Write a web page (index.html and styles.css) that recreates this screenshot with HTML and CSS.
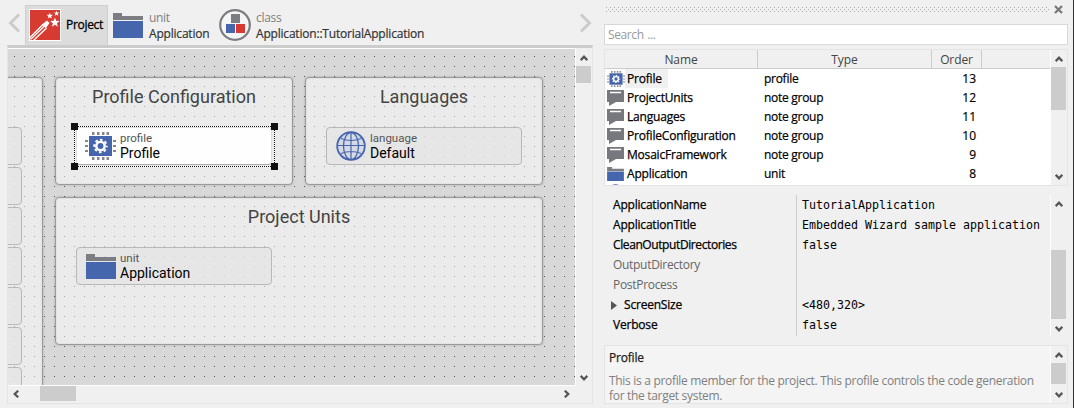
FILE: index.html
```
<!DOCTYPE html>
<html lang="en">
<head>
<meta charset="utf-8">
<title>Project</title>
<link rel="stylesheet" href="styles.css">
</head>
<body>
<svg class="defs" width="0" height="0">
  <symbol id="up" viewBox="0 0 8 6"><path d="M.7 5.200 4 1.700 7.300 5.200" fill="none" stroke="#555" stroke-width="2.200"/></symbol>
  <symbol id="down" viewBox="0 0 8 6"><path d="M.7.8 4 4.300 7.300.8" fill="none" stroke="#555" stroke-width="2.200"/></symbol>
  <symbol id="folder" viewBox="0 0 30 25"><path d="M0 0h9v3h21v4H0z" fill="#7c7d82"/><path d="M0 8h30v17H0z" fill="#4565ad"/></symbol>
  <symbol id="chip" viewBox="0 0 31 28">
    <path d="M7 1.500h3M12 1.500h3M17 1.500h3M21.500 1.500h3M7 26.500h3M12 26.500h3M17 26.500h3M21.500 26.500h3" stroke="#85868b" stroke-width="3" stroke-dasharray="2.500 .5"/>
    <path d="M0 9h3M0 14h3M0 19h3M28 9h3M28 14h3M28 19h3" stroke="#85868b" stroke-width="2"/>
    <path d="M4 4h23v20H4z" fill="#4565ad"/>
    <circle cx="15.500" cy="14" r="4.200" fill="none" stroke="#fff" stroke-width="2.500"/>
    <circle cx="15.500" cy="14" r="6.200" fill="none" stroke="#fff" stroke-width="2" stroke-dasharray="2.600 2.270" stroke-dashoffset="1.300"/>
  </symbol>
  <symbol id="note" viewBox="0 0 17 16"><path d="M0 0h17v12H9L2 16V12H0z" fill="#77787d"/><path d="M3 2.500h11" stroke="#fff" stroke-width="1.500"/></symbol>
</svg>
<div class="app">
  <main class="editor">
    <header class="crumbs">
      <svg class="prev" width="13" height="20"><path d="M11 1.500 2.500 10l8.500 8.500" fill="none" stroke="#ccc" stroke-width="3"/></svg>
      <div class="tab">
        <svg width="32" height="32" viewBox="0 0 32 32"><path d="M0 0h32v32H0z" fill="#fff"/><path d="M1 1h30v30H1z" fill="#d73a31"/>
          <path d="M1 27.500 13.500 15l4.500 4.500L6 31H1z" fill="#fff"/><path d="M1 29.500 14 16.500l2.500 2.500L4 31H1z" fill="#d73a31"/><path d="M1.500 30.500 15.500 17" stroke="#fff" stroke-width="1.200"/>
          <path d="M13 15.500l5-4 2.500 2.500-3.500 5z" fill="#fff"/>
          <path d="M26 8.500l1.100 3.300 3.600.2-2.800 2.200.9 3.500-2.900-2-3 2 1-3.500-2.800-2.200 3.600-.2zM20.800 3.500l.8 2.200h2.500l-1.900 1.500.7 2.400-2.100-1.400-2.100 1.400.7-2.400L17.500 5.700H20zM27.600 1.700l.7 1.800h2.100l-1.600 1.300.5 2-1.700-1.100-1.800 1.100.6-2-1.600-1.300h2.100z" fill="#fff"/></svg>
        <span class="tab-name">Project</span>
      </div>
      <div class="crumb unit"><svg width="30" height="25"><use href="#folder"/></svg><div><small>unit</small><b>Application</b></div></div>
      <div class="crumb class">
        <svg width="32" height="32"><circle cx="16" cy="16" r="14.800" fill="#f5f5f5" stroke="#7c7d82" stroke-width="2.200"/><path d="M12 5h9v9h-9z" fill="#7c7d82"/><path d="M7 15h9v9H7z" fill="#4565ad"/><path d="M17 15h9v9h-9z" fill="#d73a31"/></svg>
        <div><small>class</small><b>Application::TutorialApplication</b></div>
      </div>
      <svg class="next" width="13" height="20"><path d="M2 1.500 10.500 10 2 18.500" fill="none" stroke="#ccc" stroke-width="3"/></svg>
    </header>
    <section class="stage">
      <div class="canvas">
        <div class="group g-left">
          <i class="item"></i><i class="item"></i><i class="item"></i><i class="item"></i><i class="item"></i><i class="item"></i><i class="item"></i>
        </div>
        <div class="group g-profile"><h2>Profile Configuration</h2>
          <div class="item selected"><svg class="i-chip" width="31" height="28"><use href="#chip"/></svg><div><small>profile</small><strong>Profile</strong></div></div>
        </div>
        <div class="group g-lang"><h2>Languages</h2>
          <div class="item"><svg class="i-globe" width="30" height="30" viewBox="0 0 30 30"><g fill="none" stroke="#4565ad"><circle cx="15" cy="15" r="13.800" fill="#d6dae5" stroke-width="1.800"/><path d="M15 1v28M1 14.500h28M5 7.500q10 4 20 0M5 22.500q10-4 20 0" stroke-width="1.200"/><ellipse cx="15" cy="15" rx="7.500" ry="13.500" stroke-width="1.300"/></g></svg><div><small>language</small><strong>Default</strong></div></div>
        </div>
        <div class="group g-units"><h2>Project Units</h2>
          <div class="item"><svg class="i-folder" width="30" height="25"><use href="#folder"/></svg><div><small>unit</small><strong>Application</strong></div></div>
        </div>
        <div class="selection"><i></i><i></i><i></i><i></i></div>
      </div>
      <div class="vbar main-v"><svg width="8" height="6"><use href="#up"/></svg><i class="thumb"></i><svg class="end" width="8" height="6"><use href="#down"/></svg></div>
      <div class="hbar"><svg width="6" height="8"><path d="M5.200.7 1.700 4l3.500 3.300" fill="none" stroke="#555" stroke-width="2.200"/></svg><i class="thumb"></i><svg class="end" width="6" height="8"><path d="M.8.7 4.300 4 .8 7.300" fill="none" stroke="#555" stroke-width="2.200"/></svg></div>
    </section>
  </main>
  <aside class="inspector">
    <div class="titlebar"><i class="grip"></i><svg width="9" height="9"><path d="M1 1l7 7M8 1 1 8" stroke="#777" stroke-width="2.200"/></svg></div>
    <div class="search">Search ...</div>
    <section class="list">
      <div class="table">
        <div class="row head"><span>Name</span><span>Type</span><span>Order</span></div>
        <div class="row"><svg width="18" height="16"><use href="#chip"/></svg><span class="name on">Profile</span><span>profile</span><em>13</em></div>
        <div class="row"><svg width="17" height="16"><use href="#note"/></svg><span class="name">ProjectUnits</span><span>note group</span><em>12</em></div>
        <div class="row"><svg width="17" height="16"><use href="#note"/></svg><span class="name">Languages</span><span>note group</span><em>11</em></div>
        <div class="row"><svg width="17" height="16"><use href="#note"/></svg><span class="name">ProfileConfiguration</span><span>note group</span><em>10</em></div>
        <div class="row"><svg width="17" height="16"><use href="#note"/></svg><span class="name">MosaicFramework</span><span>note group</span><em>9</em></div>
        <div class="row"><svg width="17" height="14"><use href="#folder"/></svg><span class="name">Application</span><span>unit</span><em>8</em></div>
        <div class="row"><svg width="17" height="17"><circle cx="8.500" cy="8.500" r="7.500" fill="#d6dae5" stroke="#4565ad" stroke-width="1.500"/></svg></div>
      </div>
      <div class="vbar list-v"><svg width="8" height="6"><use href="#up"/></svg><i class="thumb"></i><svg class="end" width="8" height="6"><use href="#down"/></svg></div>
    </section>
    <section class="props">
      <dl>
        <dt>ApplicationName</dt><dd>TutorialApplication</dd>
        <dt>ApplicationTitle</dt><dd>Embedded Wizard sample application</dd>
        <dt class="long">CleanOutputDirectories</dt><dd>false</dd>
        <dt class="dim">OutputDirectory</dt><dd></dd>
        <dt class="dim">PostProcess</dt><dd></dd>
        <dt class="parent"><svg width="6" height="9"><path d="M0 0l6 4.500L0 9z" fill="#555"/></svg>ScreenSize</dt><dd>&lt;480,320&gt;</dd>
        <dt>Verbose</dt><dd>false</dd>
      </dl>
      <div class="vbar props-v"><svg width="8" height="6"><use href="#up"/></svg><i class="thumb"></i><svg class="end" width="8" height="6"><use href="#down"/></svg></div>
    </section>
    <section class="help">
      <div class="help-text"><h3>Profile</h3><p>This is a profile member for the project. This profile controls the code generation<br>for the target system.</p></div>
      <div class="vbar help-v"><svg width="8" height="6"><use href="#up"/></svg><i class="thumb"></i><svg class="end" width="8" height="6"><use href="#down"/></svg></div>
    </section>
  </aside>
</div>
</body>
</html>
```
FILE: styles.css
```
* { box-sizing: border-box; }
body { margin: 0; background: #f0f0f0; font: 12px/16px "Open Sans", "Noto Sans", sans-serif; color: #000; overflow: hidden; }
svg { display: block; flex: none; }
.defs { position: absolute; }
small, b, strong, em, i { font-style: normal; font-weight: 400; display: block; }
.app { display: flex; width: 1074px; height: 408px; border-right: 1px solid #333; }
.editor { width: 586px; margin-left: 7px; display: flex; flex-direction: column; }

.crumbs { height: 45px; flex: none; display: flex; white-space: nowrap; }
.prev { margin: 13px 5px 0 1px; }
.next { margin: 13px 1px 0 auto; }
.tab { width: 83px; margin: 5px 5px 0 -1px; padding: 3px 0 0 3px; border: 1px solid #cfcfcf; border-bottom: 0; background: #dcdcdc; display: flex; }
.tab-name { margin: 8px 0 0 5px; letter-spacing: -.3px; -webkit-text-stroke: .3px #000; }
.crumb { display: flex; line-height: 15px; padding-top: 10px; }
.crumb small { font-size: 12px; color: #808080; letter-spacing: -.3px; }
.crumb b { color: #333; letter-spacing: -.2px; margin-top: 1px; -webkit-text-stroke: .2px #333; }
.unit svg { margin: 3px 6px 0 0; }
.unit { width: 106px; }
.class svg { margin: -1px 5px 0 0; }

.stage { height: 359px; display: grid; grid-template-columns: 568px 16px; grid-template-rows: 338px 17px; border: 1px solid #e4e4e4; border-top: 3px solid #ccc; }
.canvas { position: relative; overflow: hidden; border: solid #fff; border-width: 1px 1px 1px 0; background: #d8d8d8 conic-gradient(from 90deg at 9px 9px, #555 90deg, transparent 0) 7px 8px / 10px 10px; }
.group { position: absolute; border: 1px solid #9b9b9b; border-radius: 4px; box-shadow: 0 0 2px rgba(0,0,0,.3), inset 0 0 2px rgba(0,0,0,.12); background: rgba(255,255,255,.48); padding: 49px 0 0 20px; }
.group h2 { position: absolute; top: 8px; left: 0; right: 0; margin: 0; text-align: center; font: 400 18px/22px Roboto, sans-serif; color: #444; }
.item { width: 196px; height: 38px; border: 1px solid #b8b8b8; border-radius: 4px; background: rgba(228,228,228,.69); display: flex; font-family: Roboto, sans-serif; font-size: 14px; padding-top: 3px; }
.item small { font-size: 11.500px; line-height: 15px; color: #555; }
.item strong { line-height: 15px; }
.item.selected { background: rgba(255,255,255,.93); border-color: #ddd; border-bottom-color: #aaa; }
.g-left { left: -100px; top: 28px; width: 135px; height: 400px; padding: 49px 20px 0 0; display: flex; flex-direction: column; gap: 2px; }
.g-left .item { width: 113px; flex: none; }
.g-profile { left: 47px; top: 28px; width: 238px; height: 108px; }
.g-lang { left: 297px; top: 28px; width: 238px; height: 108px; }
.g-units { left: 47px; top: 148px; width: 488px; height: 148px; }
.i-chip { margin: 1px 4px 0 8px; }
.i-globe { margin: 0 4px 0 9px; }
.i-folder { margin: 3px 4px 0 9px; }
.selection { position: absolute; left: 66px; top: 77px; width: 201px; height: 41px;
  background: repeating-linear-gradient(90deg, #111 0 1px, #fff 1px 2px) top / 100% 1px no-repeat, repeating-linear-gradient(90deg, #111 0 1px, #fff 1px 2px) bottom / 100% 1px no-repeat, repeating-linear-gradient(#111 0 1px, #fff 1px 2px) left / 1px 100% no-repeat, repeating-linear-gradient(#111 0 1px, #fff 1px 2px) right / 1px 100% no-repeat; }
.selection i { position: absolute; width: 7px; height: 7px; background: #111; left: -3px; top: -3px; }
.selection i:nth-child(even) { left: auto; right: -3px; }
.selection i:nth-child(n+3) { top: auto; bottom: -3px; }

.vbar { width: 16px; background: #f0f0f0; display: flex; flex-direction: column; }
.vbar svg { margin-left: 4px; }
.thumb { background: #ccc; width: 15px; }
.end { margin-top: auto; }
.main-v { padding: 7px 0 5px; }
.main-v .thumb { height: 17px; margin-top: 5px; }
.hbar { grid-column: 1 / 3; display: flex; padding: 0 22px 0 5px; }
.hbar svg { margin-top: 4px; }
.hbar .thumb { width: 36px; height: 15px; margin-left: 21px; }
.hbar .end { margin-left: auto; }

.inspector { width: 464px; margin-left: 11px; display: flex; flex-direction: column; }
.titlebar { height: 24px; display: flex; padding: 7px 4px 0 2px; }
.grip { width: 443px; height: 5px; margin-right: 5px; background: conic-gradient(from 90deg at 3px 3px, #aaa 90deg, transparent 0) -3px -3px / 4px 4px, conic-gradient(from 90deg at 3px 3px, #aaa 90deg, transparent 0) -1px -1px / 4px 4px; }
.titlebar svg { margin-top: -2px; }
.search { height: 21px; border: 1px solid #d8d8d8; background: #fff; color: #999; line-height: 20px; padding-left: 3px; letter-spacing: -.4px; word-spacing: 1px; }
.list { height: 137px; margin-top: 4px; border: 1px solid #e4e4e4; display: flex; overflow: hidden; flex: none; background: #fff; }
.table { width: 446px; overflow: hidden; }
.row { height: 19px; display: grid; grid-template-columns: 20px 133px 173px 45px; align-items: center; white-space: nowrap; line-height: 19px; letter-spacing: -.28px; -webkit-text-stroke: .2px #000; }
.row svg { margin-left: 2px; }
.row span { padding: 1px 0 0 6px; line-height: 18px; }
.row .name { padding-left: 2px; justify-self: start; letter-spacing: -.2px; -webkit-text-stroke: .25px #000; }
.row .on { background: #f0f0f0; padding-right: 6px; }
.row em { text-align: right; padding-top: 1px; line-height: 18px; letter-spacing: 0; }
.head { background: #f0f0f0; border-bottom: 1px solid #ccc; grid-template-columns: 153px 174px 50px; width: 445px; color: #444; letter-spacing: -.1px; -webkit-text-stroke: 0; }
.head span { text-align: center; padding: 1px 0 0; border-right: 1px solid #ccc; height: 18px; line-height: 17px; }
.list-v { padding: 6px 0 5px; }
.list-v .thumb { height: 43px; margin-top: 5px; }

.props { height: 141px; margin-top: 9px; display: flex; }
dl { width: 447px; margin: 0; border-right: 1px solid #fff; display: grid; grid-template-columns: 193px 1fr; grid-auto-rows: 20px; background: linear-gradient(#ccc, #ccc) 192px 0 / 1px 100% no-repeat; height: 141px; overflow: hidden; line-height: 20px; }
dt { padding-left: 9px; letter-spacing: -.2px; -webkit-text-stroke: .25px #000; }
dd { margin: 0; padding-left: 5px; font: 11.630px/21px "DejaVu Sans Mono", monospace; white-space: nowrap; }
.long { letter-spacing: -.4px; }
.dim { color: #666; letter-spacing: -.3px; -webkit-text-stroke: 0; }
.parent { display: flex; align-items: center; gap: 7px; padding-left: 7px; }
.props-v { padding: 6px 0 4px; }
.props-v .thumb { height: 69px; margin-top: 43px; }

.help { height: 59px; margin-top: 9px; border: 1px solid #e4e4e4; background: #f4f4f4; display: flex; }
.help-text { width: 446px; border-right: 1px solid #fff; padding: 4px 0 0 4px; white-space: nowrap; overflow: hidden; }
h3 { margin: 0 0 7px; font-size: 12px; line-height: 16px; font-weight: 400; color: #222; letter-spacing: -.2px; -webkit-text-stroke: .25px #222; }
p { margin: 0; line-height: 15px; color: #808080; letter-spacing: -.31px; }
.help-v { padding: 6px 0 5px; }
.help-v .thumb { height: 21px; margin-top: 5px; }
```
